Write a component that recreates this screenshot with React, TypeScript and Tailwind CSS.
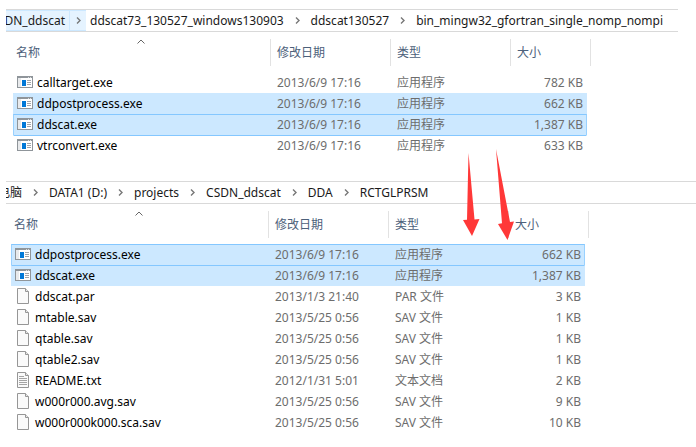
import React from 'react';
import clsx from 'clsx';

type FileKind = 'exe' | 'file' | 'text';

interface FileRow {
  name: string;
  date: string;
  type: string;
  size: string;
  kind: FileKind;
  selected?: boolean;
  focused?: boolean;
}

const sourceFiles: FileRow[] = [
  { name: 'calltarget.exe', date: '2013/6/9 17:16', type: '应用程序', size: '782 KB', kind: 'exe' },
  { name: 'ddpostprocess.exe', date: '2013/6/9 17:16', type: '应用程序', size: '662 KB', kind: 'exe', selected: true },
  { name: 'ddscat.exe', date: '2013/6/9 17:16', type: '应用程序', size: '1,387 KB', kind: 'exe', selected: true, focused: true },
  { name: 'vtrconvert.exe', date: '2013/6/9 17:16', type: '应用程序', size: '633 KB', kind: 'exe' },
];

const targetFiles: FileRow[] = [
  { name: 'ddpostprocess.exe', date: '2013/6/9 17:16', type: '应用程序', size: '662 KB', kind: 'exe', selected: true, focused: true },
  { name: 'ddscat.exe', date: '2013/6/9 17:16', type: '应用程序', size: '1,387 KB', kind: 'exe', selected: true },
  { name: 'ddscat.par', date: '2013/1/3 21:40', type: 'PAR 文件', size: '3 KB', kind: 'file' },
  { name: 'mtable.sav', date: '2013/5/25 0:56', type: 'SAV 文件', size: '1 KB', kind: 'file' },
  { name: 'qtable.sav', date: '2013/5/25 0:56', type: 'SAV 文件', size: '1 KB', kind: 'file' },
  { name: 'qtable2.sav', date: '2013/5/25 0:56', type: 'SAV 文件', size: '1 KB', kind: 'file' },
  { name: 'README.txt', date: '2012/1/31 5:01', type: '文本文档', size: '2 KB', kind: 'text' },
  { name: 'w000r000.avg.sav', date: '2013/5/25 0:56', type: 'SAV 文件', size: '9 KB', kind: 'file' },
  { name: 'w000r000k000.sca.sav', date: '2013/5/25 0:56', type: 'SAV 文件', size: '10 KB', kind: 'file' },
];

const FileIcon = ({ kind }: { kind: FileKind }) => {
  if (kind === 'exe') {
    return (
      <svg width="16" height="16" viewBox="0 0 16 16" className="mt-px" shapeRendering="crispEdges" aria-hidden="true">
        <path d="M0 2h16v12H0z" fill="#8f959a" />
        <path d="M1 4h14v9H1z" fill="#fff" />
        <path d="M1 4h3v9H1z" fill="#e8eaec" />
        <path d="M5 6h4v6H5z" fill="#0078d7" />
        <path d="M10 6h4v1h-4zM10 8h4v1h-4zM10 10h4v1h-4z" fill="#a0a4a8" />
        <path d="M11 3h1v1h-1zM13 3h1v1h-1z" fill="#d8dadc" />
      </svg>
    );
  }

  return (
    <svg width="16" height="16" viewBox="0 0 16 16" className="mt-px" aria-hidden="true">
      <path d="M2.5 .5h8l3 3v12h-11z" fill="#fafafa" stroke="#969696" />
      <path d="M10.5 .5v3h3" fill="#e8e8e8" stroke="#969696" />
      {kind === 'text' && (
        <path d="M4 4.5h5M4 6.5h8M4 8.5h8M4 10.5h8M4 12.5h8" stroke="#a4a4a4" />
      )}
    </svg>
  );
};

const Chevron = () => (
  <svg width="5" height="7" viewBox="0 0 5 7" className="shrink-0" aria-hidden="true">
    <path d="M1 .5l3 3-3 3" fill="none" stroke="#777" strokeWidth="1.4" />
  </svg>
);

const FileTable = ({ label, files }: { label: string; files: FileRow[] }) => (
  <table aria-label={label} className="w-[578px] table-fixed border-separate border-spacing-0 text-xs">
    <colgroup>
      <col className="w-[258px]" />
      <col className="w-[120px]" />
      <col className="w-[120px]" />
      <col className="w-[76px]" />
      <col className="w-1" />
    </colgroup>
    <thead className="text-left text-[#4c607a]">
      <tr className="h-[27px]">
        <th className="relative border-r border-[#e2e2e2] p-0 pl-[3px] font-normal">
          <svg width="8" height="5" viewBox="0 0 8 5" className="absolute top-0 left-[124px]" aria-hidden="true">
            <path d="M.5 4.5L4 1l3.5 3.5" fill="none" stroke="#666" />
          </svg>
          名称
        </th>
        <th className="border-r border-[#e2e2e2] p-0 pl-1.5 font-normal">修改日期</th>
        <th className="border-r border-[#e2e2e2] p-0 pl-1.5 font-normal">类型</th>
        <th colSpan={2} className="border-r border-[#e2e2e2] p-0 pl-1.5 font-normal">大小</th>
      </tr>
      <tr className="h-1.5" />
    </thead>
    <tbody className="text-[#6d6d6d]">
      {files.map((file, i) => {
        const cell = clsx(
          'border-t p-0',
          file.selected && 'bg-[#cce8ff]',
          file.focused || files[i - 1]?.focused ? 'border-t-[#84c7ff]' : 'border-t-transparent',
        );
        const side = file.focused ? 'border-x-[#99d1ff]' : 'border-x-transparent';
        return (
          <tr key={file.name} className="h-[21px] leading-5">
            <td className={clsx(cell, side, 'border-l pl-[3px] text-black')}>
              <div className="flex h-5 items-start gap-1">
                <FileIcon kind={file.kind} />
                {file.name}
              </div>
            </td>
            <td className={clsx(cell, 'pl-1.5')}>{file.date}</td>
            <td className={clsx(cell, 'pl-1.5')}>{file.type}</td>
            <td className={clsx(cell, side, 'border-r pr-[3px] text-right')}>{file.size}</td>
          </tr>
        );
      })}
    </tbody>
  </table>
);

const Crumb = ({ children }: { children: React.ReactNode }) => (
  <a href="#" className="whitespace-nowrap">{children}</a>
);

const App = () => {
  return (
    <main className="relative min-h-screen overflow-hidden bg-white pt-[9px] pl-1.5 font-['Noto_Sans','Noto_Sans_CJK_SC',sans-serif]">
      <section>
        <nav aria-label="源文件夹" className="mr-[18px] flex h-[23px] items-center overflow-hidden border-y border-[#d9d9d9] text-xs text-[#1a1a1a]">
          <div className="flex h-[21px] items-center border-y border-[#cce8ff] bg-[#e5f3ff]">
            {/* the start of the path is scrolled out of the address bar */}
            <div className="flex h-full w-16 items-center justify-end overflow-hidden border-r border-[#cce8ff] pr-1">
              <Crumb>CSDN_ddscat</Crumb>
            </div>
            <div className="flex w-4 justify-center">
              <Chevron />
            </div>
          </div>
          <div className="flex items-center gap-[11px] pl-1">
            <Crumb>ddscat73_130527_windows130903</Crumb>
            <Chevron />
            <Crumb>ddscat130527</Crumb>
            <Chevron />
            <Crumb>bin_mingw32_gfortran_single_nomp_nompi</Crumb>
          </div>
        </nav>
        <div className="pt-[7px] pl-[7px]">
          <FileTable label="源文件" files={sourceFiles} />
        </div>
      </section>

      <section className="pt-[25px]">
        <nav aria-label="目标文件夹" className="flex h-[23px] items-center gap-[11px] overflow-hidden border-y border-[#d9d9d9] text-xs text-[#1a1a1a]">
          <div className="flex w-4 shrink-0 justify-end overflow-hidden">
            <Crumb>此电脑</Crumb>
          </div>
          <Chevron />
          <Crumb>DATA1 (D:)</Crumb>
          <Chevron />
          <Crumb>projects</Crumb>
          <Chevron />
          <Crumb>CSDN_ddscat</Crumb>
          <Chevron />
          <Crumb>DDA</Crumb>
          <Chevron />
          <Crumb>RCTGLPRSM</Crumb>
        </nav>
        <div className="pt-[7px] pl-[5px]">
          <FileTable label="目标文件" files={targetFiles} />
        </div>
      </section>

      {/* arrows from the copied files to where they go */}
      <svg width="54" height="94" viewBox="0 0 54 94" className="absolute top-[147px] left-[462px]" aria-hidden="true">
        <path d="M6.5 6l6 66.5 5-.5L10 89 1 73l4-.2z" fill="#ff3838" />
        <path d="M34 2l14 73 4-.5L45.500 93 36 77l4-.8z" fill="#ff3838" />
      </svg>
    </main>
  );
};

export default App;
